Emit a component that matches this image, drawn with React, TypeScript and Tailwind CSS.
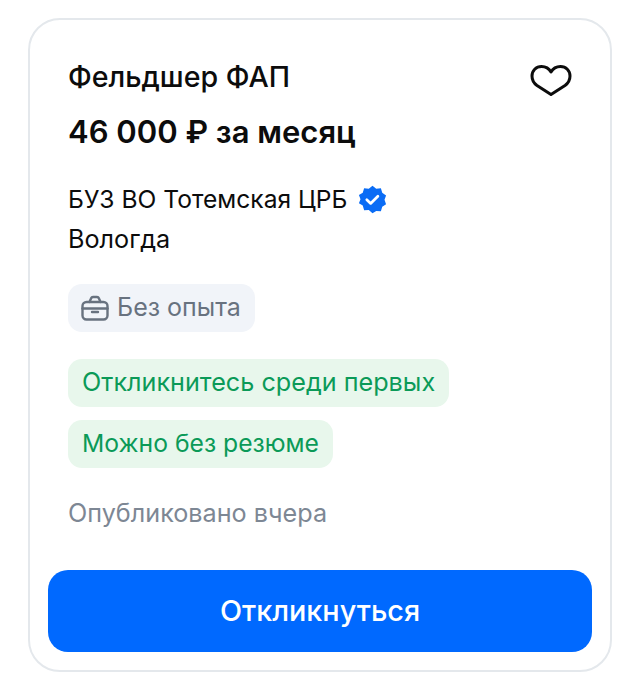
const Heart = () => (
  <svg width="42" height="32" viewBox="0 0 42 32" fill="none" stroke="#0c0c0c" strokeWidth="3" strokeLinejoin="round">
    <path d="M21 30.5 L7 21.5 C3.5 19 2 16 2 12 C2 6.5 6 2.5 11.5 2.5 C15.5 2.5 19 4.5 21 8 C23 4.5 26.5 2.5 30.5 2.5 C36 2.5 40 6.5 40 12 C40 16 38.5 19 35 21.5 Z" />
  </svg>
);

const Verified = () => (
  <svg width="29" height="29" viewBox="0 0 28 28">
    <path
      fill="#0a6cf5"
      d="M14 .8l3.6 2.7 4.5-.3 1.3 4.3 3.7 2.6-1.5 4.2 1.5 4.2-3.7 2.4-1.3 4.4-4.5-.2L14 27.2l-3.6-3.1-4.5.2-1.3-4.4L.9 17.5l1.5-3.7L.9 9.6l3.7-2.1 1.3-4.3 4.5.3z"
    />
    <path d="M8.5 14.2l3.7 3.6 7-7" fill="none" stroke="#fff" strokeWidth="2.6" strokeLinecap="round" strokeLinejoin="round" />
  </svg>
);

const Briefcase = () => (
  <svg width="28" height="26" viewBox="0 0 28 26" fill="none" stroke="#68727f" strokeWidth="2.4" strokeLinecap="round" strokeLinejoin="round">
    <path d="M8.5 7 L10 3.5 C10.4 2.5 11 2 12 2 h4 c1 0 1.6 .5 2 1.5 L19.5 7" />
    <rect x="1.5" y="7" width="25" height="17.5" rx="4" />
    <path d="M1.5 13.5h25" />
    <path d="M11 17h6" />
  </svg>
);

export default function App() {
  return (
    <div className="h-[682px] w-[640px] bg-white pt-[18px] pl-[28px] font-['Inter','Liberation_Sans',sans-serif]">
      <div className="flex h-[654px] w-[584px] flex-col rounded-[32px] border-2 border-[#e4e8ec] pt-[40px] pr-[18px] pb-[18px] pl-[18px]">
        <div className="flex flex-col pl-[20px]">
          <div className="flex items-start justify-between pr-[20px]">
            <h1 className="text-[28.6px] leading-[34px] font-medium text-[#0c0c0c]">Фельдшер ФАП</h1>
            <div className="pt-[4px]">
              <Heart />
            </div>
          </div>
          <p className="mt-[16px] text-[31px] leading-[40px] font-semibold text-[#0c0c0c]">46 000 ₽ за месяц</p>
          <div className="mt-[31px] flex items-center gap-[11px]">
            <span className="text-[24.6px] leading-[32px] text-[#0c0c0c]">БУЗ ВО Тотемская ЦРБ</span>
            <Verified />
          </div>
          <p className="mt-[8px] text-[25.2px] leading-[32px] text-[#0c0c0c]">Вологда</p>
          <div className="mt-[29px] flex">
            <span className="flex h-[48px] items-center gap-[8px] rounded-[14px] bg-[#f1f4f9] pr-[14px] pl-[13px] text-[25px] text-[#68727f]">
              <Briefcase />
              Без опыта
            </span>
          </div>
          <div className="mt-[27px] flex">
            <span className="flex h-[48px] items-center rounded-[14px] bg-[#e8f7ec] px-[14px] text-[25.2px] text-[#0b9a58]">
              Откликнитесь среди первых
            </span>
          </div>
          <div className="mt-[13px] flex">
            <span className="flex h-[48px] items-center rounded-[14px] bg-[#e8f7ec] px-[14px] text-[24.7px] text-[#0b9a58]">
              Можно без резюме
            </span>
          </div>
          <p className="mt-[29px] text-[25.2px] leading-[32px] text-[#7d8794]">Опубликовано вчера</p>
        </div>
        <button
          type="button"
          className="mt-auto flex h-[82px] w-full items-center justify-center rounded-[20px] bg-[#0069ff] text-[28.8px] font-medium text-white"
        >
          Откликнуться
        </button>
      </div>
    </div>
  );
}
